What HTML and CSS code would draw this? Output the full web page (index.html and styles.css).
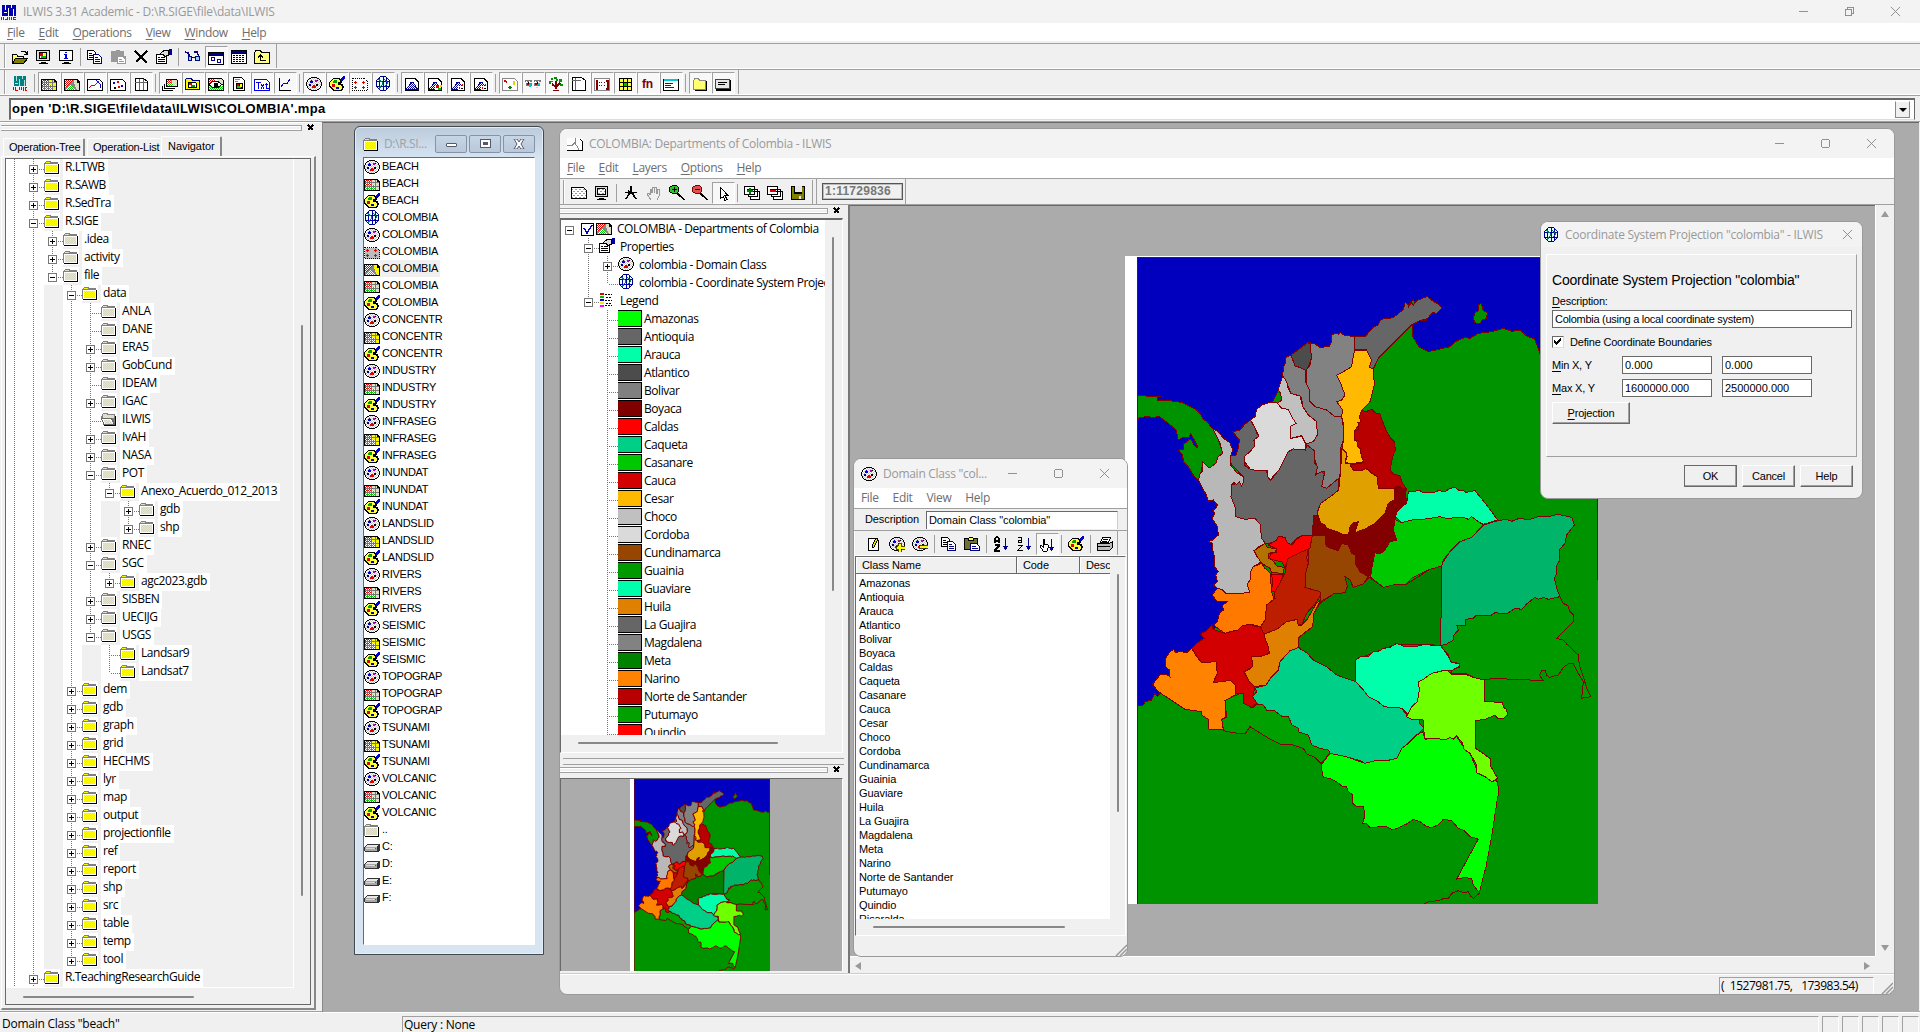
FILE: index.html
```html
<!DOCTYPE html>
<html lang="en">
<head>
<meta charset="utf-8">
<title>ILWIS 3.31 Academic</title>
<link rel="stylesheet" href="styles.css">
</head>
<body>
<svg class="defs" width="0" height="0" aria-hidden="true">
  <defs>
    <pattern id="py" width="2" height="2" patternUnits="userSpaceOnUse"><path fill="#ffff00" d="M0 0h2v2h-2z"/><path fill="#d8d8c0" d="M0 0h1v1h-1zM1 1h1v1h-1z"/></pattern>
    <pattern id="pr" width="2" height="2" patternUnits="userSpaceOnUse"><path fill="#fff" d="M0 0h2v2h-2z"/><path fill="#e00000" d="M0 0h1v1h-1zM1 1h1v1h-1z"/></pattern>
    <pattern id="pg" width="2" height="2" patternUnits="userSpaceOnUse"><path fill="#fff" d="M0 0h2v2h-2z"/><path fill="#00d000" d="M0 0h1v1h-1zM1 1h1v1h-1z"/></pattern>
    <pattern id="pw" width="2" height="2" patternUnits="userSpaceOnUse"><path fill="#fff" d="M0 0h2v2h-2z"/><path fill="#c8c8c8" d="M0 0h1v1h-1zM1 1h1v1h-1z"/></pattern>
    <pattern id="pc" width="4" height="4" patternUnits="userSpaceOnUse"><path fill="#fff" d="M0 0h4v4h-4z"/><path fill="#00d8e8" d="M0 0h2v1h-2zM2 2h2v1h-2z"/></pattern>
    <pattern id="pb" width="2" height="2" patternUnits="userSpaceOnUse"><path fill="#fff" d="M0 0h2v2h-2z"/><path fill="#0000a0" d="M0 0h1v1h-1zM1 1h1v1h-1z"/></pattern>
  </defs>
  <symbol id="folder" viewBox="0 0 16 16"><path fill="#808080" d="M1 3l1-1h4l1 1h7v11H0V4z"/><path fill="#000" d="M14 5h1v10H1v-1h13z"/><path fill="#fff" d="M1 5h13v9H1z"/><path fill="url(#py)" d="M2 3h4v1H2zM2 6h11v7H2z"/></symbol>
  <symbol id="folder-open" viewBox="0 0 16 16"><path fill="#808080" d="M1 3l1-1h4l1 1h7v11H2V8H0z"/><path fill="#000" d="M14 5h1v10H3v-1h11z"/><path fill="url(#py)" d="M2 3h4v1h7v3H2z"/><path fill="#fff" stroke="#666" d="M.5 7.500h10l3 6H3z"/><path fill="url(#py)" d="M3 9h6l3 4H4z"/></symbol>
  <symbol id="domain" viewBox="0 0 16 16"><path fill="url(#pw)" d="M5 2h6v1h2v2h2v6h-2v2h-2v1H5v-1H3v-2H1V5h2V3h2z"/><path fill="#000" d="M5 1h6v1H5zM3 2h2v1H3zM11 2h2v1h-2zM2 3h1v1H2zM13 3h1v1h-1zM1 4h1v2H1zM14 4h1v2h-1zM0 6h1v4H0zM15 6h1v4h-1zM1 10h1v2H1zM14 10h1v2h-1zM2 12h1v1H2zM13 12h1v1h-1zM3 13h2v1H3zM11 13h2v1h-2zM5 14h6v1H5z"/><path fill="#0000d0" d="M5 4h1v1h1v2H4V5h1z"/><path fill="#c000b0" d="M9 4h2v2H9z"/><path fill="#000080" d="M3 8h2v2H3z"/><path fill="#e00000" d="M7 9h2v1h1v2H6v-2h1z"/><path fill="#000" d="M10 8h2v2h-2zM11 4h1v1h-1z"/></symbol>
  <symbol id="raster" viewBox="0 0 16 16"><path fill="#000" d="M0 3h13l3 3v9H0z"/><path fill="#fff" d="M1 4h12v2h2v8H1z"/><path fill="url(#pr)" d="M1 4h6v6H1z"/><path fill="url(#pg)" d="M4 9h7v5H1v-4h3z"/><path fill="url(#py)" d="M7 4h6v2h2v8h-4V9H7z"/><path stroke="#777" fill="none" d="M1 6.500h14M1 10.500h14M3.500 4v10M7.500 4v10M11.500 4v10"/></symbol>
  <symbol id="polygon" viewBox="0 0 16 16"><path fill="#000" d="M0 3h13l3 3v9H0z"/><path fill="#888" d="M1 4h12v3h2v7H1z"/><path fill="url(#pr)" d="M1 4h8L3 11H1z"/><path fill="url(#pg)" d="M7 8l4 6H2z"/><path fill="url(#py)" d="M10 4h3v3h2v7h-2l-3-7z"/></symbol>
  <symbol id="palette" viewBox="0 0 16 16"><path fill="#000" d="M4 2h6l2 2v4h2l1 3-2 4H4L0 11V6z"/><path fill="#ffff40" d="M4 3h5l2 2-1 4 3 1v2l-2 2H5l-4-4V6z"/><path fill="#00a000" d="M5 4h3v3H4z"/><path fill="#e00000" d="M3 8h3v3H3z"/><path fill="#0000d0" d="M7 11h3v2H7zM14 0h2v2l-3 3h-1V3z"/><path fill="#000" d="M9 6l3-1 1 1-3 3H9z"/></symbol>
  <symbol id="globe" viewBox="0 0 16 16"><path fill="#e6ffff" stroke="#000080" d="M5.500.5h5l4 4v6l-4 4h-5l-4-4v-6z"/><path fill="none" stroke="#0000a0" d="M8 1v14M2 5h12M2 10h12M5 2q-2 6 0 12M11 2q2 6 0 12"/><path stroke="#008060" fill="none" d="M3 3l4 3v3l-3 4M9 3l4 4-3 3"/></symbol>
  <symbol id="georef" viewBox="0 0 16 16"><path fill="#bcbcbc" stroke="#000" stroke-dasharray="1 1" d="M.5 3.500h12l3 3v8H.5z"/><path stroke="#e00000" d="M2 6.500h3M3.500 5v3M2 11.500h3M3.500 10v3M10 6.500h3M11.500 5v3M10 11.500h3M11.500 10v3"/></symbol>
  <symbol id="georef2" viewBox="0 0 16 16"><path fill="#fff" stroke="#000" stroke-dasharray="1 1" d="M.5 2.500h12l3 3v9H.5z"/><path stroke="#e00000" d="M2 6.500h3M3.500 5v3M2 11.500h3M3.500 10v3M10 6.500h3M11.500 5v3M10 11.500h3M11.500 10v3"/></symbol>
  <symbol id="drive" viewBox="0 0 16 16"><path fill="#333" d="M3 5h12l1 1v5l-2 2H1v-1H0V8z"/><path fill="#e8e8e8" d="M3 6h11l-1 2H1z"/><path fill="#a8a8a8" d="M1 8h12v4H1z"/><path fill="#d8d8d8" d="M2 9h9v1H2z"/><path fill="#00a000" d="M11 9h1v1h-1z"/></symbol>
  <symbol id="segment" viewBox="0 0 16 16"><path fill="#fff" stroke="#000" d="M.5 3.500h12l3 3v8H.5z"/><path fill="none" stroke="#0000d0" d="M9 4l4 4v4"/><path fill="none" stroke="#e00000" d="M2 12l3-3h3l4-4"/></symbol>
  <symbol id="pointmap" viewBox="0 0 16 16"><path fill="#fff" stroke="#000" d="M.5 3.500h12l3 3v8H.5z"/><path fill="#0000d0" d="M3 6h2v2H3zM11 9h2v2h-2z"/><path fill="#e00000" d="M7 5h2v2H7zM8 10h2v2H8z"/><path d="M4 11h2v2H4z"/></symbol>
  <symbol id="table" viewBox="0 0 16 16"><path fill="#fff" stroke="#000" d="M2.500 2.500h8l4 3v9h-12z"/><path stroke="#666" fill="none" d="M2 6.500h12M6.500 3v11M10.500 3v11"/></symbol>
  <symbol id="maplist" viewBox="0 0 16 16"><path fill="#fff" stroke="#000" d="M.5 9.500v5h10M2.500 7.500v5h10M4.500 5.500v5h10"/><path d="M4 3h10l2 2v6H4z"/><path fill="#888" d="M5 4h10v6H5z"/><path fill="url(#pr)" d="M5 4h4v3H5z"/><path fill="url(#pg)" d="M5 7h6v3H5z"/><path fill="url(#py)" d="M10 4h5v6h-4z"/></symbol>
  <symbol id="objcoll" viewBox="0 0 16 16"><path fill="url(#py)" stroke="#000080" d="M.5 3.500l1-1h5l1 2h7v9H.5z"/><path fill="#fff" stroke="#000" d="M3.500 6.500h7l1 1v4h-8z"/><path fill="#e00000" d="M4 7h3v2H4z"/><path fill="#00a000" d="M6 9h4v2H6z"/></symbol>
  <symbol id="view" viewBox="0 0 16 16"><path d="M0 2h13l3 3v10H0z"/><path fill="#fff" d="M1 3h12v2h2v9H1z"/><path fill="url(#pr)" d="M1 3h6v5H1z"/><path fill="url(#py)" d="M9 3h4l2 2v5z"/><path fill="url(#pg)" d="M1 10h14v4H1z"/><path fill="#fff" stroke="#000" d="M1 8.500l4-3h5l4 3-4 3H5z"/><path d="M6 7h4v4H6z"/></symbol>
  <symbol id="layout" viewBox="0 0 16 16"><path fill="#fff" stroke="#000" d="M2.500 1.500h8l3 3v10h-11z"/><path fill="#888" d="M4 3h5v1H4zM4 5h3v1H4z"/><path d="M5 7h7v6H5z"/><path fill="#e00000" d="M6 8h2v2H6z"/><path fill="#00d000" d="M6 10h4v2H6z"/><path fill="#ffff00" d="M9 8h2v3H9z"/></symbol>
  <symbol id="txt" viewBox="0 0 16 16"><path fill="#fff" stroke="#0000e0" d="M.5 3.500h12l3 3v8H.5z"/><path stroke="#0000e0" fill="none" d="M2 6.500h5M4.500 6v7M7 8l3 5M10 8l-3 5M12.500 7v5h2M11 8.500h3"/></symbol>
  <symbol id="graph" viewBox="0 0 16 16"><path stroke="#000" fill="none" d="M2.500 2v12.500H14"/><path stroke="#0000d0" fill="none" d="M4 11l3-4h2l1 1 3-5"/></symbol>
  <symbol id="histo" viewBox="0 0 16 16"><path fill="#fff" stroke="#000" stroke-width="1.200" d="M1.500 2.500h9l4 3v9h-13z"/><path fill="url(#pb)" stroke="#0000a0" d="M2 13l3-3 2-4h2l3 5 2 2z"/></symbol>
  <symbol id="histo-r" viewBox="0 0 16 16"><use href="#histo"/><path fill="#fff" d="M8 10h6v4H8z"/><path fill="#e00000" d="M9 9h3v3H9z"/><path fill="#00c000" d="M11 12h3v2h-3z"/><path fill="#ffd000" d="M13 9h2v2h-2z"/></symbol>
  <symbol id="histo-p" viewBox="0 0 16 16"><use href="#histo"/><path fill="#fff" d="M8 10h6v4H8z"/><path fill="#e00000" d="M9 11h1v2H9zM12 8h1v2h-1z"/><path d="M11 12h2v1h-2z"/></symbol>
  <symbol id="rep" viewBox="0 0 16 16"><path fill="#fff" stroke="#888" d="M.5 2.500h12l3 3v9H.5z"/><path fill="#e00000" d="M2 4h2v2H2zM4 5h1v2H4z"/><path fill="#f0d000" d="M11 5h2v4h-2z"/><path fill="#008000" d="M6 11h4v1H6zM7 10h2v3H7z"/></symbol>
  <symbol id="stereo" viewBox="0 0 16 16"><path fill="#777" d="M0 4h7v2H0zM1 7h6v3H1zM9 4h7v2H9zM9 7h6v3H9z"/><path fill="#fff" d="M1 5h1v1H1zM4 5h1v1H4zM10 5h1v1h-1zM13 5h1v1h-1z"/><path fill="#a00" d="M2 7h2v2H2zM10 7h2v2h-2z"/><path fill="#0cc" d="M4 8h2v3H4zM13 7h2v2h-2z"/><path d="M3 6h1v2H3zM12 6h1v2h-1z"/><path fill="#ee0" d="M11 11h2v1h-2z"/></symbol>
  <symbol id="fntree" viewBox="0 0 16 16"><path fill="none" stroke="#800000" stroke-width="2" d="M8 5v8M4 8l4 3 4-4"/><path fill="#800000" d="M5 14h6v1H5z"/><path fill="#009000" d="M1 5h4v1H3v2H1zM6 1h3v2h1v2H8V3H6zM11 3h3v3h-3zM12 8h3v2h-3zM3 2h2v2H3z"/></symbol>
  <symbol id="matrix" viewBox="0 0 16 16"><path fill="#fff" stroke="#888" d="M.5 2.500h15v12H.5z"/><path stroke="#800000" stroke-width="2" fill="none" d="M4 4.500H2.500v8H4M12 4.500h1.500v8H12"/><path fill="#800000" d="M5 6h1v1H5zM7 6h1v1H7zM10 6h1v1h-1zM5 9h1v1H5zM7 9h1v1H7zM10 9h1v1h-1z"/></symbol>
  <symbol id="sheet" viewBox="0 0 16 16"><path fill="#fff" stroke="#000" d="M1.500 1.500h9l4 3v10h-13z"/><path stroke="#666" d="M1 4.500h9M4.500 2v12"/></symbol>
  <symbol id="filter" viewBox="0 0 16 16"><path d="M2 2h13v13H2z"/><path fill="#ffff20" d="M3 3h3v3H3zM7 3h3v3H7zM11 3h3v3h-3zM3 7h3v3H3zM11 7h3v3h-3zM3 11h3v3H3zM7 11h3v3H7zM11 11h3v3h-3z"/><path fill="#00c000" d="M7 7h3v3H7z"/></symbol>
  <symbol id="scriptw" viewBox="0 0 16 16"><path fill="#fff" stroke="#000" d="M.5 3.500h15v11H.5z"/><path fill="#00c8d8" d="M1 3h14v2H1z"/><path fill="#800000" d="M2 7h8v1H2zM2 9h6v1H2zM2 11h9v1H2z"/></symbol>
  <symbol id="card" viewBox="0 0 16 16"><path d="M1 4h15v11H1z"/><path fill="#e8e8e8" stroke="#444" d="M.5 3.500h14v9H.5z"/><path d="M3 6h9v1H3zM3 8h7v1H3z"/></symbol>
  <symbol id="folder-y" viewBox="0 0 16 16"><path fill="#ffff70" stroke="#888" d="M1.500 5l1-2.500h4l1 2h6v9h-12z"/><path d="M14 5h1v10H3v-1h11z"/></symbol>
  <symbol id="ilwis" viewBox="0 0 16 16"><path fill="#008080" d="M2 1h12v10H2z"/><path fill="#b8e0e0" d="M4 1h1v5H4zM7 4h1v7H7zM10 1h1v3h-1zM12 5h1v6h-1zM3 8h3v1H3z"/><path fill="#e00000" d="M1 12h1v3H1zM3 12h1v3h2v1H3zM7 12h1v3H7zM9 12h1v3H9zM11 12h1v4h-1zM13 12h2v1h-1v2h1v1h-2z"/></symbol>
  <symbol id="logo" viewBox="0 0 16 16"><path fill="#0000b0" d="M1 1h14v11H1z"/><path fill="#fff" d="M4 1h1v5H4zM7 4h1v8H7zM10 1h1v3h-1zM12 5h1v7h-1zM3 8h3v1H3z"/><path fill="#e00000" d="M0 13h1v3H0zM2 13h1v3H2zM4 15h2v1H4zM6 13h1v3H6zM8 13h1v3H8zM10 13h1v3h-1zM12 13h3v1h-2v1h2v1h-3z"/></symbol>
  <symbol id="open" viewBox="0 0 16 16"><path fill="#ffff60" stroke="#000" d="M.5 14V5.500h4l1 1.500h6v2"/><path fill="#808000" stroke="#000" d="M.5 14.500l3-5h12l-4 5z"/><path fill="none" stroke="#000" d="M9 3l2-1h2l2 3M15 2v3h-3"/></symbol>
  <symbol id="display" viewBox="0 0 16 16"><path fill="#ddd" stroke="#000" d="M1.500 1.500h13v10h-13z"/><path fill="#fff" stroke="#000" d="M4.500 3.500h7v6h-7z"/><path fill="#e00000" d="M5 4h3v3H5z"/><path fill="#00c000" d="M6 7h5v2H6z"/><path fill="#ff0" d="M9 4h2v3H9z"/><path d="M6 13h5v1H6zM4 14h9v1H4z"/></symbol>
  <symbol id="info" viewBox="0 0 16 16"><path fill="#fff" stroke="#000" d="M1.500 1.500h13v10h-13z"/><path fill="#0000d0" d="M7 3h2v1H7zM6 5h3v4h1v1H6V9h1V6H6z"/><path d="M6 13h5v1H6zM4 14h9v1H4z"/></symbol>
  <symbol id="copy" viewBox="0 0 16 16"><path fill="#fff" stroke="#000" d="M.5 1.500h6l2 2v7h-8z"/><path stroke="#000" d="M2 4.500h3M2 6.500h4M2 8.500h4"/><path fill="#fff" stroke="#000080" d="M6.500 5.500h5l3 3v6h-8z"/><path stroke="#000080" d="M8 8.500h3M8 10.500h5M8 12.500h5"/></symbol>
  <symbol id="paste-off" viewBox="0 0 16 16"><path fill="#999" d="M1 2h4l1-1h3l1 1h4v5h2v8H7v-2H1z"/><path fill="#fff" d="M8 8h5v1l2 1v4H8z"/><path fill="#999" d="M9 10h3v1H9zM9 12h5v1H9z"/></symbol>
  <symbol id="paste" viewBox="0 0 16 16"><path d="M0 2h14v12H0z"/><path fill="#707030" d="M1 3h12v10H1z"/><path fill="#ffff60" stroke="#000" d="M4.500 4.500v-2l2-1.500h1l2 1.500v2z"/><path fill="#fff" stroke="#000080" d="M6.500 7.500h6l3 3v4h-9z"/><path stroke="#000080" d="M8 10.500h4M8 12.500h6"/></symbol>
  <symbol id="del" viewBox="0 0 16 16"><path stroke="#000" stroke-width="1.700" fill="none" d="M2 2l12 12M14 2L3 13"/></symbol>
  <symbol id="props" viewBox="0 0 16 16"><path fill="#fff" stroke="#000" d="M.5 5.500h10v9H.5z"/><path d="M2 8h2v1H2zM5 8h4v1H5zM2 10h7v1H2zM2 12h7v1H2z"/><path fill="#ddd" stroke="#000" d="M4 5l4-3.500h4v5l-3 1-2-2z"/><path fill="#0000a0" d="M13 0h3v6h-3z"/></symbol>
  <symbol id="glasses" viewBox="0 0 16 16"><path fill="none" stroke="#000080" stroke-width="1.400" d="M0 3l3 1 2 4M9 3l3 0 2 5"/><path fill="#80e0ff" stroke="#000080" d="M3.500 7.500h3v4h-3zM10.500 7.500h4v4h-4zM7 8h3"/></symbol>
  <symbol id="winlarge" viewBox="0 0 16 16"><path d="M0 2h16v13H0z"/><path fill="#000090" d="M1 3h14v2H1z"/><path fill="#fff" d="M1 6h14v8H1z"/><path fill="none" stroke="#000090" d="M3.500 7.500h3v3h-3zM9.500 9.500h3v3h-3z"/></symbol>
  <symbol id="winlist" viewBox="0 0 16 16"><path d="M0 1h16v14H0z"/><path fill="#000090" d="M1 2h14v2H1z"/><path fill="#fff" d="M1 5h14v9H1z"/><path stroke="#000" stroke-dasharray="2 1" d="M2 6.500h12M2 8.500h12M2 10.500h12M2 12.500h12"/></symbol>
  <symbol id="up" viewBox="0 0 16 16"><path fill="#ffff80" stroke="#000" d="M.5 4l1-2.500h5l1 2h8v11H.5z"/><path stroke="#000" fill="none" d="M6.500 6v5.500H12M4 8.500L6.500 6 9 8.500"/></symbol>
  <symbol id="maplayer" viewBox="0 0 16 16"><path fill="url(#pc)" stroke="#000" d="M.5 2.500h12l3 3v8H.5z"/></symbol>
  <symbol id="screen" viewBox="0 0 16 16"><path fill="#ddd" stroke="#000" d="M1.500 1.500h12v10h-12z"/><path fill="url(#pc)" stroke="#000" d="M3.500 3.500h7l1 1v5h-8z"/><path d="M5 13h5v1H5zM3 14h9v1H3z"/></symbol>
  <symbol id="measure" viewBox="0 0 16 16"><path fill="none" stroke="#000" stroke-width="1.600" d="M8 1v5L3 14M8 6l5 8M2 7.500h12M5 6l6 4"/></symbol>
  <symbol id="hand" viewBox="0 0 16 16"><path fill="none" stroke="#999" d="M5 15l-4-6v-1h2l1 2V4h1l1 4V2h2v6l1-6h1l1 7 1-5h2l-1 7-2 4"/></symbol>
  <symbol id="zin" viewBox="0 0 16 16"><path d="M9 8l7 6-1 1-8-6z"/><path fill="#30c030" stroke="#000" d="M3.500.5h4l2 2v4l-2 2h-4l-3-2v-4z"/><path d="M5 2h1v5H5zM3 4h5v1H3z"/></symbol>
  <symbol id="zout" viewBox="0 0 16 16"><path d="M9 8l7 6-1 1-8-6z"/><path fill="#e05050" stroke="#800000" d="M3.500.5h4l2 2v4l-2 2h-4l-3-2v-4z"/><path d="M3 4h5v1H3z"/></symbol>
  <symbol id="arrow" viewBox="0 0 16 16"><path fill="#fff" stroke="#000" d="M5.500 1.500v11l3-2 1.500 4 2-1-2-4h3z"/></symbol>
  <symbol id="ladd" viewBox="0 0 16 16"><path fill="#fff" stroke="#000" d="M4.500 6.500h11v8h-9v-3M2.500 4.500h11v7h-9v-3M.5 1.500h10v8H.5z"/><path fill="#008000" d="M5 3h2v6H5zM3 5h6v2H3z"/></symbol>
  <symbol id="lrem" viewBox="0 0 16 16"><path fill="#fff" stroke="#000" d="M4.500 6.500h11v8h-9v-3M2.500 4.500h11v7h-9v-3M.5 1.500h10v8H.5z"/><path fill="#e00000" d="M3 5h6v2H3z"/></symbol>
  <symbol id="save" viewBox="0 0 16 16"><path d="M1 1h14v14H1z"/><path fill="#808000" d="M2 2h2v7h8V2h2v12H2z"/><path fill="#e8e8e8" d="M5 1h7v6H5zM9 11h2v3H9z"/></symbol>
  <symbol id="swatches" viewBox="0 0 16 16"><path fill="#e00000" d="M1 1h4v2H1z"/><path fill="#00c000" d="M1 4h4v2H1z"/><path fill="#0000e0" d="M1 7h4v2H1z"/><path fill="#ee0" d="M1 10h4v2H1z"/><path fill="#f0f" d="M1 13h4v2H1z"/><path stroke="#000" stroke-dasharray="2 1" d="M6 2.500h7M7 5.500h6M6 8.500h7M7 11.500h6M6 13.500h7"/></symbol>
  <symbol id="mapwin" viewBox="0 0 16 16"><path fill="#fff" d="M0 2h16v13H0z"/><path fill="none" stroke="#000" d="M13 3l2.500 2.500v9H0"/><path fill="none" stroke="#888" d="M0 9.500h5l3-3V2M8 7l3 5v2"/></symbol>
  <symbol id="edit" viewBox="0 0 16 16"><path fill="#fff" stroke="#000" d="M2.500 2.500h8l2 2v10h-10z"/><path fill="#ffe000" stroke="#000" d="M6 10l4-8 2 1-4 8-2 1z"/></symbol>
  <symbol id="dadd" viewBox="0 0 16 16"><use href="#domain"/><path fill="#ff0" stroke="#000" stroke-width=".7" d="M9 7h3v3h4v3h-4v3H9v-3H7v-3h2z"/></symbol>
  <symbol id="dsub" viewBox="0 0 16 16"><use href="#domain"/><path fill="#ff0" stroke="#000" stroke-width=".7" d="M7 9h9v3H7z"/></symbol>
  <symbol id="darrow" viewBox="0 0 16 16"><path fill="#000090" d="M12 2h1v8h2l-2 4h-1l-2-4h2z"/></symbol>
  <symbol id="az" viewBox="0 0 16 16"><path fill="none" stroke="#000" stroke-width="1.500" d="M2 7V3l1.500-2h1L6 3v4M2 5h4M2 9h4v1l-4 4v1h5"/><use href="#darrow"/></symbol>
  <symbol id="az2" viewBox="0 0 16 16"><path fill="none" stroke="#000" d="M2 1.500h3.500v5H2.500v-2h3M2 9.500h4l-4 5h5"/><use href="#darrow"/></symbol>
  <symbol id="handsort" viewBox="0 0 16 16"><path fill="#fff" stroke="#000" d="M4 14l-3-5 1-1 2 2V2h1v5l2 0 2 1v3l-1 3z"/><use href="#darrow"/></symbol>
  <symbol id="print" viewBox="0 0 16 16"><path fill="#fff" stroke="#000" d="M5.500 1.500h8l-2 5h-8z"/><path fill="#bbb" stroke="#000" d="M.5 7.500h12l3-2v6l-3 3H.5z"/><path fill="#ee0" d="M9 11h3v1H9z"/><path stroke="#000" d="M6 3.500h5M5 5.500h5M1 10.500h12"/></symbol>
  <symbol id="min" viewBox="0 0 12 12"><path d="M1 6.500h10" fill="none" stroke="#888"/></symbol>
  <symbol id="max" viewBox="0 0 12 12"><rect x="1.500" y="1.500" width="9" height="9" rx="1" fill="none" stroke="#888"/></symbol>
  <symbol id="restore" viewBox="0 0 12 12"><path fill="none" stroke="#888" d="M1.500 3.500h7v7h-7zM3.500 3V1.500h7v7H9"/></symbol>
  <symbol id="close" viewBox="0 0 12 12"><path d="M1 1l10 10M11 1L1 11" fill="none" stroke="#888" shape-rendering="auto"/></symbol>
  <symbol id="x" viewBox="0 0 8 8"><path d="M1 1l5 5M6 1L1 6" fill="none" stroke="#000" stroke-width="1.700"/></symbol>
  <symbol id="grip" viewBox="0 0 12 12"><path d="M1 12L12 1M5 12l7-7M9 12l3-3" fill="none" stroke="#999" stroke-width="1.500" shape-rendering="auto"/></symbol>
  <symbol id="colombia" viewBox="21 -669 1383 1941" preserveAspectRatio="none">
    <rect x="21" y="-669" width="1383" height="1941" fill="#009300"/>
    <g class="land">
      <path fill="#0000be" d="M10-680H1415V-340L1380-332 1360-345 1333-332 1299-340 1270-352 1238-355 1228-385 1214-423 1190-432 1170-450 1146-446 1120-455 1085-445 1045-440 1020-425 1005-428 977-416 960-400 926-392 895-385 868-399 848-430 846-465 870-478 890-480 850-540 700-400 500-380 400-180 335-100 303-60 300 200 330 340 250 450 130 560 90 640 82 650 75 640 65 660 45 665 40 675 10 678z"/>
      <path fill="#009300" d="M1030-488l6-16 8-2 2-20 8-4 6 22 12 6-2 18-14 4-6 12-16-4z"/>
      <g transform="translate(-30 -720)">
        <path fill="#009300" d="M40 465L70 466 85 470 125 468 112 472V480L150 482 185 487 215 502 228 508 240 520 250 538 262 545 272 560 280 568 295 600 308 640 292 652 290 668 268 684 248 665 245 690 236 722 220 705 205 680 190 665 188 645 176 630 190 628 192 610 200 606 208 598 215 600 222 615 235 625 222 598 211 580 208 592 190 592 175 600 168 570 145 550 125 535 118 530 100 532 80 530 60 533 40 550z"/>
        <path fill="#666" d="M704 290L735 290 748 275 760 262 775 254 782 240 790 236 808 235 820 232 832 224 850 208 855 188 862 190 866 200 874 188 880 195 890 182 900 178 915 172 922 170 940 184 955 192 966 204 950 220 938 218 922 236 900 242 878 252 840 290 800 330 775 355 760 387 748 382 755 360 740 330 704 328z"/>
        <path fill="#808080" d="M513 345L525 378 555 388 558 430 568 450 570 485 585 500 620 510 645 530 665 530 670 560 670 600 662 625 661 700 657 715 640 735 620 745 605 740 604 715 615 700 612 693 592 707 588 690 592 680 585 660 583 632 570 622 558 612 580 605 592 585 590 545 565 525 548 500 545 475 540 468 512 460 500 425 488 408 490 385 497 365 497 352z"/>
        <path fill="#828282" d="M568 308L585 312 600 322 627 320 635 305 635 285 645 280 655 282 660 277 675 287 690 288 704 290 704 330 698 360 695 380 670 395 650 405 660 425 675 465 665 480 650 485 658 495 668 510 665 530 645 530 620 510 585 500 570 485 568 450 558 430 558 392 570 375 575 350z"/>
        <path fill="#4c4c4c" d="M513 345L540 325 563 308 572 312 572 335 575 350 568 375 558 392 540 382 525 378z"/>
        <path fill="#c0c0c0" d="M488 408L500 425 503 440 512 460 540 468 548 500 565 525 590 545 592 585 580 605 558 612 545 587 513 595 512 558 528 550 515 530 505 508 485 505 472 490 485 480 482 460 474 450 482 425z"/>
      </g>
      <path fill="#666" d="M308-145L330-150 345-168 362-180 375-160 380-140 388-130 372-118 374-102 345-68 342-45 360-33 410-29 412-12 420 0 430-8 445-30 460-65 475-85 485-95 526-90 530-105 553-88 555-50 563-40 557-15 574-25 583-18 575 20 590 25 626-5V30L608 45 600 60 572 70 562 95 567 105 550 108 548 165 520 165 500 175 480 195 470 190 465 172 450 170 440 185 408 192 395 175 392 150 375 115 345 118 317 110 315 80 303 50 305 15 328 8 340 8 341-8 325-25 302-50 302-75 318-75 325-95 328-120z"/>
      <g transform="translate(-30 -720)">
        <path fill="#dadada" d="M392 540L405 530 410 508 425 495 450 487 470 487 485 505 505 508 515 530 528 550 512 558 513 595 530 592 545 587 555 610 556 630 540 628 520 627 505 635 490 665 480 685 475 692 460 708 452 720 443 710 442 692 410 692 390 687 374 665 375 648 390 635 404 618 402 600 417 588 408 570z"/>
        <path fill="#ffb900" d="M704 330L740 330 755 360 748 382 760 388 763 435 750 485 725 512 718 530 722 545 705 572 710 605 720 625 733 665 690 672 675 665 682 650 668 625 672 560 665 530 668 510 650 485 665 480 675 465 660 425 650 405 670 395 695 380 698 360z"/>
      </g>
      <path fill="#b8b8b8" d="M250-152L265-145 280-125 300-112 308-90 302-70V-45L320-22 341-8 340 8 335 18 328 5 320 14 312 8 305 15 303 50 315 80 317 110 345 118 375 115 392 135V150L395 175 408 192 385 200 372 212 380 230 395 245 370 260 360 300 355 325 360 338 320 343 290 340 275 328 262 325 250 315 262 305 257 285 265 275 253 258V230L248 210V190L236 185 248 180 265 165 262 140 246 115 255 100 248 90 258 85 262 75 250 60 235 64 228 42 220 30 206 2 208-15 218-28 218-55 228-45 238-36 260-52 262-68 278-80 270-110z"/>
      <path fill="#e0a000" d="M636-95L650-80 646-50 660-48 700-35 740-25 745 22 795 25 792 60 775 70 765 100 735 130 685 158 675 155 685 125 670 130 655 165 635 162 590 145 585 135 572 130 562 100 572 70 608 45 626 30 632-30z"/>
      <path fill="#820000" d="M795 20L810 14 830 28 826 40 830 70 815 80 800 95 795 120 790 150 795 165 800 180 780 185 765 210 750 222 735 216 733 240 725 265 720 285 705 285 690 275 675 250 675 225 665 220 655 195 635 190 625 212 610 212 590 200 585 165 548 165 550 108 562 110 572 130 585 135 590 145 620 155 635 162 655 165 660 140 670 128 685 125 675 158 710 145 735 130 765 100 775 70 792 60z"/>
      <path fill="#b90000" transform="translate(-30 -720)" d="M725 512L740 514 755 508 765 518 780 522 790 550 800 575 812 595 823 605 826 630 818 650 810 690 820 702 840 708 845 725 860 748 845 742 830 738 822 745 775 745 772 710 755 700 740 685 725 692 700 690 690 675 733 668 725 650 720 625 712 620 715 600 703 600 705 572 716 568 714 548 722 545 718 530z"/>
      <path fill="#00ffa8" d="M835 35L870 32 880 38 910 38 925 32 945 35 960 25 975 22 985 30 1000 32 1008 37 1035 32 1070 75 1103 120 1060 133 1045 125 1025 110 1015 118 1000 112 950 115 930 110 880 118 845 120 815 128 797 110 800 95 815 80 830 70z"/>
      <path fill="#00b469" d="M1060 135L1103 122 1130 118 1145 124 1165 116 1200 118 1225 110 1255 110 1285 103 1325 112 1333 135 1310 165 1305 190 1288 210 1290 240 1278 260 1280 280 1273 295 1282 330 1290 350 1255 358 1240 352 1225 358 1215 352 1190 372 1175 388 1155 385 1130 402 1095 398 1085 405 1040 405 1030 415 1005 418 1005 435 980 435 985 450 972 465 970 480 950 492 930 497 933 255 960 215 990 185 1025 172z"/>
      <path fill="#00c800" d="M815 128L845 120 880 118 930 110 950 115 1000 112 1015 118 1025 110 1045 125 1060 135 1025 172 990 185 960 215 940 240 935 258 900 268 870 282 845 295 830 312 800 312 760 322 722 292 725 265 735 218 750 222 765 210 780 185 800 180 790 150 795 118z"/>
      <path fill="#009a00" d="M930 497L950 492 970 480 972 465 985 450 980 435 1005 435 1005 418 1030 415 1040 405 1085 405 1095 398 1130 402 1155 385 1175 388 1190 372 1215 352 1225 358 1240 352 1255 358 1290 350 1300 370 1315 378 1318 392 1330 405 1330 425 1310 445 1280 475 1300 480 1310 492 1345 525 1348 555 1360 590 1370 625 1382 650 1355 655 1360 605 1345 580 1330 550 1315 552 1300 562 1285 585 1258 592 1250 585 1245 570 1235 572 1228 585 1238 600 1200 600 1140 598 1100 594 1062 600 1030 592 1005 580 965 582V570L988 562 988 550 972 548 962 545 955 525 945 515z"/>
      <path fill="#008200" d="M935 258L932 497 885 492 800 492 740 515 675 540 677 605 620 590 550 540 505 500 507 472 548 440 552 400 570 370 610 342 645 338 652 320 645 290 660 300 670 322 700 312 718 292 760 322 800 312 830 312 900 268z"/>
      <path fill="#00ffaa" d="M675 540L692 530 715 530 730 515 745 515 760 505 780 502 800 490 820 498 865 498 885 492 900 495 932 497 945 515 955 530 965 548 988 550 988 558 965 572 945 570 905 580 880 598 865 605 868 630 862 665 845 680 835 705 815 685 800 682 780 684 760 678 740 662 715 650 700 630 677 605z"/>
      <path fill="#00cf87" d="M505 503L530 518 550 540 590 560 620 585 677 605 700 630 715 650 740 662 760 678 780 684 800 682 815 685 835 712 870 718 868 730 882 745 860 765 835 790 815 805 800 835 770 842 735 842 705 850 690 842 655 832 600 822 595 810 570 805 545 795 535 765 505 755 505 745 485 735 475 708 455 708 430 690 410 690 400 675 380 672 368 650 380 635 375 625 408 615 425 590 445 570 450 545 480 512z"/>
      <path fill="#0f0" d="M600 820L625 825 655 832 690 845 705 850 735 842 770 842 800 835 815 805 835 790 860 765 878 755 885 778 905 775 950 778 962 768 980 770 1000 800 1020 820 1045 880 1065 890 1085 905 1100 900 1107 930 1100 970 1085 1070 1068 1160 1048 1238 1030 1215 1025 1195 1000 1193 980 1197 1045 1077 1020 1070 1000 1050 985 1045 965 1022 940 1018 925 1035 905 1042 890 1040 870 1025 850 1018 830 1032 790 1050 765 1038 720 1044 710 1030 698 1030 705 1005 700 980 680 980 668 970 668 945 655 935 650 920 635 918 620 905 600 895 580 893 573 855z"/>
      <path fill="#6eff00" d="M865 605L880 598 905 580 950 570 965 582 1005 582 1030 592 1062 600 1062 665 1118 667 1120 682 1130 688 1132 705 1120 716 1105 716 1095 706 1065 718 1037 722 1037 805 1080 835 1083 860 1103 895 1085 905 1065 890 1040 878 1040 855 1020 820 1002 808 998 790 980 768 970 778 960 772 950 778 885 775 880 745 880 720 860 718 845 718 830 710 845 680 862 665 868 630z"/>
      <path fill="#00a000" d="M338 635L345 670 368 683 380 672 400 675 410 690 430 690 455 708 475 708 485 735 505 745 505 755 535 765 545 795 570 805 595 810 600 820 573 850 555 832 530 822 520 805 490 795 450 792 425 780 400 765 360 740 345 762 310 758 280 752 275 718 290 712 285 660 320 645z"/>
      <path fill="#e08000" d="M570 362L552 400 548 440 528 455 507 472 505 503 480 512 450 545 445 570 425 590 408 615 375 620 358 605 342 575 355 570 368 560 360 545 365 530 390 530 418 520 402 462 440 448 470 425 503 418 505 435 515 435 530 420 545 395 560 368z"/>
      <path fill="#d20000" d="M245 435L250 448 285 460 325 450 335 438 362 432 375 440 392 440 402 462 405 475 415 500 418 520 390 530 365 530 368 560 342 575 358 605 375 620 368 650 382 672 370 676 365 683 342 670 340 640 318 640 315 615 300 600 280 605 250 607 262 580 258 545 215 548 200 530 185 505 200 490 222 475 212 462 232 450z"/>
      <path fill="#ff8200" d="M185 505L200 530 215 548 258 545 262 580 250 607 280 605 300 600 315 615 315 645 285 662 288 712 275 718 280 748 235 747 235 718 215 705V695L165 688 135 668 100 645 80 630 68 612 90 585 105 582 120 590 118 570 105 558 107 535 120 515 130 508 138 518 150 514 170 518z"/>
      <path fill="#ff7800" d="M262 325L275 328 290 342 360 338 355 325 352 312 360 300 362 275 370 260 395 250 405 265 420 278 422 300 425 335 432 358 410 375 405 420 392 440 362 432 335 438 325 450 300 455 285 460 250 435 262 425 268 400 280 390 278 375 292 366 262 365 246 345z"/>
      <path fill="#be1e00" d="M475 235L500 222 535 205 530 235 535 250 528 275 525 322 545 328 570 335 570 350 555 372 530 400 515 435 503 432 503 418 470 425 440 448 402 462 392 440 405 420 410 375 435 355 432 335 450 310 465 280 470 250z"/>
      <path fill="#964600" d="M548 165L570 168 585 165 585 185 590 200 625 212 635 190 655 195 665 220 675 225 675 250 690 275 715 290 700 312 670 322 660 300 645 290 652 320 645 338 610 342 572 365 570 335 545 328 525 322 528 275 535 250 535 190z"/>
      <path fill="#b07300" d="M372 212L405 190 412 202 440 207 435 217 415 220 418 235 430 243 440 258 463 262 460 280 425 278 420 265 395 250 385 235z"/>
      <path fill="red" d="M415 195L440 180 445 170 465 172 472 188 485 195 500 178 520 165 547 165 540 205 500 222 475 235 465 262 455 245 440 242 415 235 425 220 440 217V207zM425 282L460 283 450 310 435 335H424L428 310z"/>
      <path fill="none" d="M883 1272L895 1265 925 1262 940 1256 955 1256 965 1240 985 1232 1000 1238 1015 1235 1022 1248 1030 1255 1048 1240M1402-680V300"/>
    </g>
    <path class="frame" fill="none" d="M1404-667H22V1272"/>
  </symbol>
</svg>

<header class="titlebar"><svg class="i"><use href="#logo"/></svg><span>ILWIS 3.31 Academic - D:\R.SIGE\file\data\ILWIS</span>
  <div class="controls"><svg><use href="#min"/></svg><svg><use href="#restore"/></svg><svg><use href="#close"/></svg></div></header>
<nav class="menu main-menu"><span><u>F</u>ile</span><span><u>E</u>dit</span><span><u>O</u>perations</span><span><u>V</u>iew</span><span><u>W</u>indow</span><span><u>H</u>elp</span></nav>
<div class="toolbar" data-tools="open display info | copy paste-off del props | glasses *winlarge winlist up" data-width="277"></div>
<div class="toolbar" data-tools="ilwis | *raster *polygon *segment *pointmap *table | *maplist *objcoll *view *layout *txt *graph | *domain *palette *georef2 *globe | *histo *histo-r *histo-p *histo-p | *rep *stereo *fntree *sheet *matrix *filter *fn *scriptw | *folder-y *card" data-width="739"></div>
<div class="command"><div class="command-field">open 'D:\R.SIGE\file\data\ILWIS\COLOMBIA'.mpa<span class="drop"></span></div></div>

<main class="workspace">
  <aside class="dock">
    <div class="gripper"><i></i><svg><use href="#x"/></svg></div>
    <div class="tabs"><span>Operation-Tree</span><span>Operation-List</span><span class="on">Navigator</span></div>
    <div class="dock-page">
      <div class="tree-frame">
        <div class="tree" id="navigator-tree"></div>
        <div class="vthumb nav-v"></div><div class="hthumb nav-h"></div>
      </div>
    </div>
  </aside>
  <section class="desktop">
    <div class="files-window">
      <div class="files-title"><svg class="i"><use href="#folder"/></svg><span>D:\R.SI...</span><b><i class="m"></i></b><b><i class="r"></i></b><b><svg viewBox="0 0 12 10"><path d="M1 0h3l2 3 2-3h3L8 5l3 5H8L6 7l-2 3H1l3-5z" fill="#fff" stroke="#555a6a"/></svg></b></div>
      <div class="files-list" id="file-list"></div>
    </div>

    <div class="window map-window">
      <div class="wtitle"><svg class="i"><use href="#mapwin"/></svg><span>COLOMBIA: Departments of Colombia - ILWIS</span><div class="controls"><svg><use href="#min"/></svg><svg><use href="#max"/></svg><svg><use href="#close"/></svg></div></div>
      <nav class="menu"><span><u>F</u>ile</span><span><u>E</u>dit</span><span><u>L</u>ayers</span><span><u>O</u>ptions</span><span><u>H</u>elp</span></nav>
      <div class="toolbar" data-tools="maplayer screen | measure hand zin zout *arrow | ladd lrem save" data-width="254"><div class="scale"><span>1:11729836</span></div></div>
      <div class="map-body">
        <div class="layers">
          <div class="gripper"><i></i><svg><use href="#x"/></svg></div>
          <div class="legend-frame">
            <div class="legend" id="legend-tree"></div>
            <div class="vthumb leg-v"></div><div class="hthumb leg-h"></div>
          </div>
          <div class="splitter"></div>
          <div class="gripper"><i></i><svg><use href="#x"/></svg></div>
          <div class="overview"><svg class="mini"><use href="#colombia"/></svg></div>
        </div>
        <div class="map-view">
          <div class="map-canvas"><div class="sheet"><svg class="map"><use href="#colombia"/></svg></div></div>
          <div class="scroll-v"><i class="tri up"></i><i class="tri down"></i></div>
          <div class="scroll-h"><i class="tri left"></i><i class="tri right"></i></div>
        </div>
      </div>
      <div class="map-status"><span>(&nbsp; 1527981.75,&nbsp;&nbsp; 173983.54)</span><svg><use href="#grip"/></svg></div>
    </div>

    <div class="window domain-window">
      <div class="wtitle"><svg class="i"><use href="#domain"/></svg><span>Domain Class "col...</span><div class="controls"><svg><use href="#min"/></svg><svg><use href="#max"/></svg><svg><use href="#close"/></svg></div></div>
      <nav class="menu"><span>File</span><span>Edit</span><span>View</span><span>Help</span></nav>
      <div class="descr"><label>Description</label><div>Domain Class "colombia"</div></div>
      <div class="toolbar" data-tools="edit dadd dsub | copy paste | az az2 *handsort | palette | print" data-width="268"></div>
      <div class="class-frame">
        <div class="class-head"><span>Class Name</span><span>Code</span><span>Desc</span></div>
        <div class="classes" id="class-list"></div>
        <div class="vthumb cls-v"></div><div class="hthumb cls-h"></div>
      </div>
      <div class="domain-status"><svg><use href="#grip"/></svg></div>
    </div>

    <div class="window dialog">
      <div class="wtitle"><svg class="i"><use href="#globe"/></svg><span>Coordinate System Projection "colombia" - ILWIS</span><div class="controls"><svg><use href="#close"/></svg></div></div>
      <div class="panel">
        <h1>Coordinate System Projection "colombia"</h1>
        <label class="dl"><u>D</u>escription:</label>
        <div class="input wide">Colombia (using a local coordinate system)</div>
        <div class="check"><i><svg viewBox="0 0 8 8"><path d="M0 2v3l2 2 5-4V0L2 4z"/></svg></i><span>Define Coordinate Boundaries</span></div>
        <div class="pair"><label><u>M</u>in X, Y</label><div class="input">0.000</div><div class="input">0.000</div></div>
        <div class="pair"><label><u>M</u>ax X, Y</label><div class="input">1600000.000</div><div class="input">2500000.000</div></div>
        <div class="btn proj"><span><u>P</u>rojection</span></div>
      </div>
      <div class="buttons"><div class="btn ok">OK</div><div class="btn">Cancel</div><div class="btn">Help</div></div>
    </div>
  </section>
</main>
<footer class="status"><span class="s1">Domain Class "beach"</span><span class="s2">Query : None</span><i></i><i></i><i></i><i></i><i></i></footer>
<script src="app.js"></script>
</body>
</html>
```

FILE: styles.css
```css
* { box-sizing: border-box; }
body { margin: 0; width: 1920px; height: 1032px; overflow: hidden; display: flex; flex-direction: column; background: #f0f0f0; font: 12px/18px "Open Sans", "Noto Sans", sans-serif; color: #000; letter-spacing: -0.35px; white-space: nowrap; }
.defs { position: absolute; }
svg { display: block; flex: none; shape-rendering: crispEdges; }
.i { width: 16px; height: 16px; }
u { text-decoration: underline; text-underline-offset: 2px; text-decoration-thickness: 1px; }

.titlebar { flex: none; height: 23px; background: #f3f3f3; display: flex; align-items: center; padding-left: 1px; color: #999; letter-spacing: -.23px; }
.titlebar span { margin-left: 6px; }
.controls { margin-left: auto; display: flex; gap: 35px; padding-right: 19px; }
.controls svg { width: 11px; height: 11px; }
.menu { flex: none; display: flex; background: #fff; color: #6d6d6d; height: 20px; align-items: center; padding-left: 7px; gap: 14px; }
.main-menu { height: 20px; border-bottom: 2px solid #f0f0f0; padding-top: 2px; }

.toolbar { flex: none; height: 26px; display: flex; align-items: center; border-top: 1px solid #a0a0a0; border-bottom: 1px solid #fff; padding-left: 4px; }
.tools { display: flex; align-items: flex-end; height: 24px; border-right: 1px solid #a0a0a0; border-left: 1px solid #a0a0a0; padding: 0 0 0 4px; box-shadow: inset 1px 0 #fff; }
.tools b { width: 23px; height: 22px; padding: 3px; flex: none; border: 0; }
.tools b.on { background: #f8f8f8; border: 1px solid; border-color: #a0a0a0 #fff #fff #a0a0a0; padding: 3px 2px 2px; }
.tools hr { width: 1px; height: 18px; margin: 0 3px 2px 2px; border: 0; background: #a0a0a0; flex: none; }
.fn { font: bold 12px/16px "Liberation Sans", sans-serif; color: #800000; padding-left: 2px; display: block; }

.command { flex: none; height: 27px; padding: 2px 5px 1px 9px; border-bottom: 1px solid #a0a0a0; border-top: 1px solid #a0a0a0; }
.command-field { background: #fff; height: 22px; border: 1px solid #696969; border-width: 2px 1px 1px 2px; border-bottom-color: #ddd; padding: 0 1px 0 1px; font: bold 13px/18px "Liberation Sans", sans-serif; letter-spacing: .33px; display: flex; justify-content: space-between; }
.drop { width: 15px; height: 17px; background: #f0f0f0; border: 1px solid #888; border-top-color: #fff; display: grid; place-items: center; margin-top: 1px; margin-right: 3px; }
.drop::after { content: ""; border: 4px solid transparent; border-top-color: #000; border-bottom: 0; }

.workspace { flex: 1; min-height: 0; display: flex; }
.dock { width: 320px; display: flex; flex-direction: column; border-top: 1px solid #fff; }
.gripper { height: 9px; display: flex; align-items: center; padding-left: 1px; gap: 5px; flex: none; }
.gripper i { flex: none; width: 301px; height: 6px; border: 1px solid #a0a0a0; border-width: 1px 1px 1px 0; box-shadow: inset 0 1px #fff, inset 0 -1px #fff; }
.gripper svg { width: 8px; height: 8px; }
.tabs { display: flex; height: 24px; align-items: flex-end; padding-left: 3px; gap: 2px; flex: none; font: 11px/17px "Liberation Sans", sans-serif; letter-spacing: -.2px; }
.tabs span { height: 18px; padding: 0 4px 0 5px; border: 1px solid #fff; border-right: 2px solid #888; border-bottom: 0; border-radius: 2px 2px 0 0; width: 82px; }
.tabs span:nth-child(2) { width: 74px; border-right: 0; margin-right: -2px; }
.tabs .on { height: 20px; width: 61px; padding-left: 6px; line-height: 18px; letter-spacing: -.05px; }
.dock-page { flex: 1; min-height: 0; border: 1px solid #fff; border-right: 2px solid #888; border-bottom: 2px solid #888; margin: 0 4px 2px 1px; padding: 1px 3px 3px 3px; }
.tree-frame { position: relative; height: 100%; border: 1px solid #696969; overflow: hidden; }
.tree { width: 288px; height: 829px; overflow: hidden; border-right: 1px solid #fff; border-bottom: 1px solid #fff; letter-spacing: -.44px; }
.row { height: 18px; display: flex; }
.cell { width: 19px; height: 18px; position: relative; flex: none; }
.cell.l, .cell.t, .cell.e { background: #fff; }
.cell.l, .cell.t, .cell.x { background-image: repeating-linear-gradient(#777 0 1px, #fff 1px 2px); background-size: 1px 100%; background-position: 8px 0; background-repeat: no-repeat; }
.cell.x { background-size: 1px 10px; }
.cell.x, .cell.w { background-color: #fff; }
.cell.t::before, .cell.x::before { content: ""; position: absolute; left: 9px; right: 0; top: 10px; height: 1px; background: repeating-linear-gradient(90deg, #fff 0 1px, #777 1px 2px); }
.cell b { position: absolute; left: 4px; top: 6px; width: 9px; height: 9px; border: 1px solid #777; background: #fff; }
.cell b::before { content: ""; position: absolute; left: 1px; top: 3px; width: 5px; height: 1px; background: #000; }
.cell b.p::after { content: ""; position: absolute; left: 3px; top: 1px; width: 1px; height: 5px; background: #000; }
.row .i { background: #fff; margin-right: 3px; height: 16px; }
.row .txt { background: #fff; padding: 0 3px 0 2px; line-height: 16px; }
.vthumb, .hthumb { position: absolute; background: #888; border-radius: 1px; }
.vthumb { width: 2px; } .hthumb { height: 2px; }
.nav-v { left: 295px; top: 166px; height: 571px; }
.nav-h { left: 17px; top: 837px; width: 171px; }

.desktop { flex: 1; position: relative; background: #ababab; border-left: 1px solid #888; border-top: 1px solid #696969; margin: 0 1px 0 2px; overflow: hidden; }
.files-window { position: absolute; left: 31px; top: 3px; width: 190px; height: 829px; border: 1px solid #404850; border-radius: 6px 6px 0 0; background: linear-gradient(#bccbdb, #d7e4f2 32px); padding: 5px 8px 8px; box-shadow: inset 0 0 0 1px #e4eef8; }
.files-title { height: 25px; display: flex; align-items: center; color: #9aa2aa; gap: 2px; padding: 0 0 2px 0; }
.files-title span { width: 49px; margin-left: 3px; }
.files-title b { width: 32px; height: 18px; border: 1px solid #8593a8; border-radius: 2px; display: grid; place-items: center; background: linear-gradient(#c7d5e5, #b9c8da); flex: none; }
.files-title .m { width: 11px; height: 4px; border: 1px solid #555a6a; background: #fff; border-radius: 1px; margin-top: 3px; }
.files-title .r { width: 11px; height: 9px; border: 1px solid #555a6a; background: #555a6a; box-shadow: inset 0 0 0 2px #fff; }
.files-title b svg { width: 12px; height: 10px; shape-rendering: auto; }
.files-list { height: 788px; border: 1px solid #696969; border-right-color: #fff; border-bottom-color: #fff; background: #fff; font: 11px/17px "Liberation Sans", sans-serif; letter-spacing: -.25px; }
.file { display: flex; height: 17px; align-items: center; }
.file span { padding: 0 2px; height: 17px; margin-left: 0; }
.file.sel span { background: #f0f0f0; }

.window { position: absolute; background: #f0f0f0; border: 1px solid #999; border-radius: 8px; display: flex; flex-direction: column; overflow: hidden; }
.wtitle { flex: none; display: flex; align-items: center; height: 29px; background: #f3f3f3; color: #999; padding-left: 7px; letter-spacing: -.27px; }
.wtitle span { margin-left: 6px; }
.map-window { left: 236px; top: 5px; width: 1336px; height: 867px; }
.map-window .toolbar { height: 27px; padding-left: 3px; border-bottom: 1px solid #a0a0a0; }
.map-window > .wtitle .controls { padding-right: 17px; }
.scale { height: 25px; border-left: 1px solid #a0a0a0; border-right: 1px solid #a0a0a0; padding: 4px 2px 0 5px; margin-left: 3px; }
.scale span { display: block; width: 81px; height: 17px; border: 1px solid #555; outline: 1px solid #bbb; outline-offset: -2px; font: bold 12px/15px "Liberation Sans", sans-serif; letter-spacing: .25px; color: #777; padding-left: 2px; }
.map-body { flex: 1; min-height: 0; display: flex; }
.layers { width: 288px; display: flex; flex-direction: column; padding-top: 1px; }
.layers .gripper { padding-left: 0; }
.layers .gripper i { width: 268px; }
.legend-frame { position: relative; height: 535px; flex: none; margin: 3px 5px 0 0; border: 1px solid #696969; border-right-color: #fff; border-bottom-color: #fff; border-top-width: 2px; }
.legend { width: 264px; height: 515px; background: #fff; overflow: hidden; letter-spacing: -.44px; }
.legend .row { overflow: hidden; }
.legend .row .txt { line-height: 17px; }
.tick { width: 13px; height: 13px; border: 1px solid #000; margin: 3px 2px 0 0; flex: none; }
.tick svg { width: 11px; height: 11px; }
.info-i { font: 10px/12px "Liberation Serif", serif; color: #0000c0; width: 5px; margin-left: -4px; }
.sw { width: 25px; height: 17px; border: 1px solid #000; margin-left: -1px; flex: none; }
.leg-v { left: 271px; top: 17px; height: 354px; }
.leg-h { left: 17px; top: 522px; width: 200px; }
.splitter { height: 12px; margin: 0 4px 0 3px; border-bottom: 1px solid #a0a0a0; background: linear-gradient(#f0f0f0 5px, #a0a0a0 5px 6px, #f0f0f0 6px); flex: none; }
.overview { margin: 4px 5px 3px 0; flex: 1; border: 1px solid #696969; border-width: 1px 1px 0; border-right-color: #fff; background: #ababab; padding-left: 69px; overflow: hidden; }
.mini { width: 140px; height: 192px; border-left: 4px solid #fff; }
.land path, .frame { stroke: #820000; stroke-width: 1px; vector-effect: non-scaling-stroke; }
.map-view { flex: 1; display: grid; grid-template: 751px 1fr / 1025px 1fr; border-left: 2px solid #777; }
.map-canvas { background: #ababab; padding: 50px 0 0 275px; border-top: 1px solid #696969; }
.sheet { width: 473px; height: 648px; background: #fff; padding: 1px 0 0 12px; }
.map { width: 461px; height: 647px; }
.scroll-v { display: flex; flex-direction: column; justify-content: space-between; align-items: center; padding: 6px 0 5px; border-left: 1px solid #fff; }
.scroll-h { display: flex; justify-content: space-between; align-items: center; padding: 0 5px; border-top: 1px solid #fff; grid-column: 1; }
.tri { border: 4px solid transparent; width: 0; height: 0; }
.tri.up { border-bottom: 6px solid #999; border-top: 0; } .tri.down { border-top: 6px solid #999; border-bottom: 0; }
.tri.left { border-right: 6px solid #999; border-left: 0; } .tri.right { border-left: 6px solid #999; border-right: 0; }
.map-status { height: 20px; border-top: 1px solid #fff; flex: none; display: flex; justify-content: flex-end; align-items: flex-end; padding: 0 1px 0 0; box-shadow: 0 -1px #ccc; }
.map-status span { border: 1px solid #a0a0a0; border-right-color: #fff; border-bottom: 0; width: 155px; height: 17px; line-height: 16px; padding-left: 1px; margin-right: 7px; letter-spacing: -.5px; word-spacing: .3px; }
.map-status svg, .domain-status svg { width: 12px; height: 12px; }

.domain-window { left: 530px; top: 335px; width: 275px; height: 499px; }
.domain-window .controls { gap: 35px; padding-right: 17px; }
.descr { display: flex; height: 22px; border: 1px solid #a0a0a0; border-width: 1px 0 0; padding: 2px 9px 1px 10px; font: 11px/17px "Liberation Sans", sans-serif; letter-spacing: -.1px; flex: none; }
.descr label { width: 62px; padding-left: 1px; }
.descr div { flex: 1; background: #fff; border: 1px solid #696969; border-right-color: #ccc; border-bottom: 0; padding-left: 2px; }
.domain-window .toolbar { padding-left: 0; height: 26px; }
.domain-window .tools { border-left: 0; padding-left: 9px; }
.class-frame { position: relative; height: 380px; flex: none; border: 1px solid #696969; border-right-color: #fff; border-bottom-color: #fff; margin: 0 1px; font: 11px/14px "Liberation Sans", sans-serif; letter-spacing: -.1px; }
.class-head { display: flex; height: 17px; width: 254px; overflow: hidden; border-bottom: 1px solid #696969; }
.class-head span { flex: none; width: 161px; padding: 1px 5px 1px 6px; border-right: 1px solid #696969; box-shadow: inset 1px 1px #fff; }
.class-head span:nth-child(2) { width: 63px; }
.classes { width: 254px; height: 345px; background: #fff; padding: 2px 0 0 3px; overflow: hidden; }
.cls-v { left: 261px; top: 17px; height: 238px; }
.cls-h { left: 17px; top: 369px; width: 192px; }
.domain-status { flex: 1; display: flex; justify-content: flex-end; align-items: flex-end; }

.dialog { left: 1217px; top: 98px; width: 323px; height: 278px; font: 11px/15px "Liberation Sans", sans-serif; letter-spacing: -.2px; }
.dialog .wtitle { height: 25px; padding-left: 2px; font: 12px/18px "Open Sans", sans-serif; letter-spacing: -0.27px; }
.dialog .controls { padding-right: 9px; }
.panel { margin: 7px 5px 0; height: 203px; border: 1px solid #fff; border-right-color: #a0a0a0; border-bottom-color: #a0a0a0; padding: 15px 4px 0 5px; }
.panel h1 { margin: 0; font: 14px/20px "Liberation Sans", sans-serif; }
.dl { display: block; margin: 4px 0 1px; }
.input { background: #fff; border: 1px solid #696969; height: 18px; width: 90px; padding: 0 2px; line-height: 16px; }
.wide { width: 300px; letter-spacing: -.27px; }
.check { display: flex; gap: 6px; margin: 7px 0 7px; align-items: center; height: 14px; }
.check i { width: 12px; height: 12px; background: #fff; border: 1px solid #696969; border-right-color: #ddd; border-bottom-color: #ddd; display: grid; place-items: center; }
.check svg { width: 8px; height: 8px; }
.pair { display: flex; gap: 10px; margin-bottom: 5px; align-items: center; }
.pair .input { letter-spacing: 0; }
.pair label { width: 60px; }
.btn { border: 1px solid #fff; border-right: 1px solid #696969; border-bottom: 1px solid #696969; box-shadow: inset -1px -1px #a0a0a0; display: grid; place-items: center; height: 22px; width: 53px; }
.proj { width: 78px; }
.buttons { display: flex; gap: 5px; justify-content: flex-end; padding: 8px 9px 0 0; }
.btn.ok { outline: 1px solid #696969; outline-offset: -1px; }

.status { height: 20px; flex: none; border-top: 1px solid #fff; display: flex; align-items: flex-end; padding-left: 2px; letter-spacing: -.25px; line-height: 16px; box-shadow: 0 -1px #a0a0a0; }
.s1 { width: 400px; }
.s2 { width: 1417px; border: 1px solid #a0a0a0; border-bottom: 0; border-right-color: #fff; padding-left: 1px; height: 16px; }
.status i { width: 17px; height: 16px; border: 1px solid #a0a0a0; border-right-color: #fff; border-bottom: 0; margin-left: 3px; }
```

FILE: app.js
```javascript
// Toolbars: icon ids separated by spaces, "|" is a separator, "*" a sunken button.
const icon = (id) => id === 'fn' ? '<span class="fn">fn</span>' : `<svg class="i"><use href="#${id}"/></svg>`;
document.querySelectorAll('[data-tools]').forEach((bar) => {
  const html = bar.dataset.tools.split(' ').map((t) => {
    if (t === '|') return '<hr>';
    const on = t[0] === '*';
    return `<b class="${on ? 'on' : ''}">${icon(on ? t.slice(1) : t)}</b>`;
  }).join('');
  bar.insertAdjacentHTML('afterbegin', `<div class="tools" style="width:${bar.dataset.width - 4}px">${html}</div>`);
});

// Tree rows: cells string, then icon and label.
// l line, n gray blank, w white blank, t branch, x last branch, + / - expanders (p, m: last child)
function cells(spec) {
  return [...spec].map((c) => {
    if ('+-'.includes(c)) return `<div class="cell t"><b class="${c === '+' ? 'p' : ''}"></b></div>`;
    if ('pm'.includes(c)) return `<div class="cell x"><b class="${c === 'p' ? 'p' : ''}"></b></div>`;
    return `<div class="cell ${c}"></div>`;
  }).join('');
}
const nav = `l+ R.LTWB
l+ R.SAWB
l+ R.SedTra
l- R.SIGE
ll+ .idea
ll+ activity
llm file
lln- data
llnlt ANLA
llnlt DANE
llnl+ ERA5
llnl+ GobCund
llnlt IDEAM
llnl+ IGAC
llnlt ILWIS
llnl+ IvAH
llnl+ NASA
llnl- POT
llnllm Anexo_Acuerdo_012_2013
llnlln+ gdb
llnllnp shp
llnl+ RNEC
llnl- SGC
llnllp agc2023.gdb
llnl+ SISBEN
llnl+ UECIJG
llnlm USGS
llnlnt Landsar9
llnlnx Landsat7
lln+ dem
lln+ gdb
lln+ graph
lln+ grid
lln+ HECHMS
lln+ lyr
lln+ map
lln+ output
lln+ projectionfile
lln+ ref
lln+ report
lln+ shp
lln+ src
lln+ table
lln+ temp
llnp tool
l+ R.TeachingResearchGuide`.split('\n');
document.getElementById('navigator-tree').innerHTML = nav.map((r) => {
  const [spec, name] = r.split(' ');
  return `<div class="row">${cells(spec)}${icon(name === 'ILWIS' ? 'folder-open' : 'folder')}<span class="txt">${name}</span></div>`;
}).join('');

const trio = ['domain', 'raster', 'palette'];
const files = [];
const add = (name, icons) => icons.forEach((i) => files.push([i, name]));
add('BEACH', trio);
add('COLOMBIA', ['globe', 'domain', 'georef', 'polygon', 'raster', 'palette']);
['CONCENTR', 'INDUSTRY', 'INFRASEG', 'INUNDAT', 'LANDSLID', 'RIVERS', 'SEISMIC', 'TOPOGRAP', 'TSUNAMI', 'VOLCANIC'].forEach((n) => add(n, trio));
add('..', ['folder']);
['C:', 'D:', 'E:', 'F:'].forEach((n) => add(n, ['drive']));
document.getElementById('file-list').innerHTML = files.map(([i, n]) =>
  `<div class="file${i === 'polygon' ? ' sel' : ''}">${icon(i)}<span>${n}</span></div>`).join('');

const depts = { Amazonas: '#0f0', Antioquia: '#666', Arauca: '#00ffa8', Atlantico: '#4c4c4c', Bolivar: '#808080', Boyaca: '#800000', Caldas: '#f00', Caqueta: '#00cf87', Casanare: '#00c800', Cauca: '#d20000', Cesar: '#ffb900', Choco: '#c0c0c0', Cordoba: '#dadada', Cundinamarca: '#964600', Guainia: '#009a00', Guaviare: '#00ffaa', Huila: '#e08000', 'La Guajira': '#666', Magdalena: '#828282', Meta: '#008200', Narino: '#ff8200', 'Norte de Santander': '#b90000', Putumayo: '#00a000', Quindio: '#f00' };
const head = [
  `<div class="row"><div class="cell w"><b></b></div><span class="info-i">i</span><div class="tick"><svg viewBox="0 0 11 11"><path d="M2 4l3 5 5-8" fill="none" stroke="#0000d0" stroke-width="1.500"/></svg></div>${icon('polygon')}<span class="txt">COLOMBIA - Departments of Colombia</span></div>`,
  `<div class="row">${cells('w-')}${icon('props')}<span class="txt">Properties</span></div>`,
  `<div class="row">${cells('wl+')}${icon('domain')}<span class="txt">colombia - Domain Class</span></div>`,
  `<div class="row">${cells('wlx')}${icon('globe')}<span class="txt">colombia - Coordinate System Projection</span></div>`,
  `<div class="row">${cells('wm')}${icon('swatches')}<span class="txt">Legend</span></div>`
];
document.getElementById('legend-tree').innerHTML = head.join('') + Object.entries(depts).map(([n, c]) =>
  `<div class="row">${cells('wwt')}<div class="sw" style="background:${c}"></div><span class="txt">${n}</span></div>`).join('');
document.getElementById('class-list').innerHTML = [...Object.keys(depts), 'Risaralda'].map((n) => `<div>${n}</div>`).join('');
```
